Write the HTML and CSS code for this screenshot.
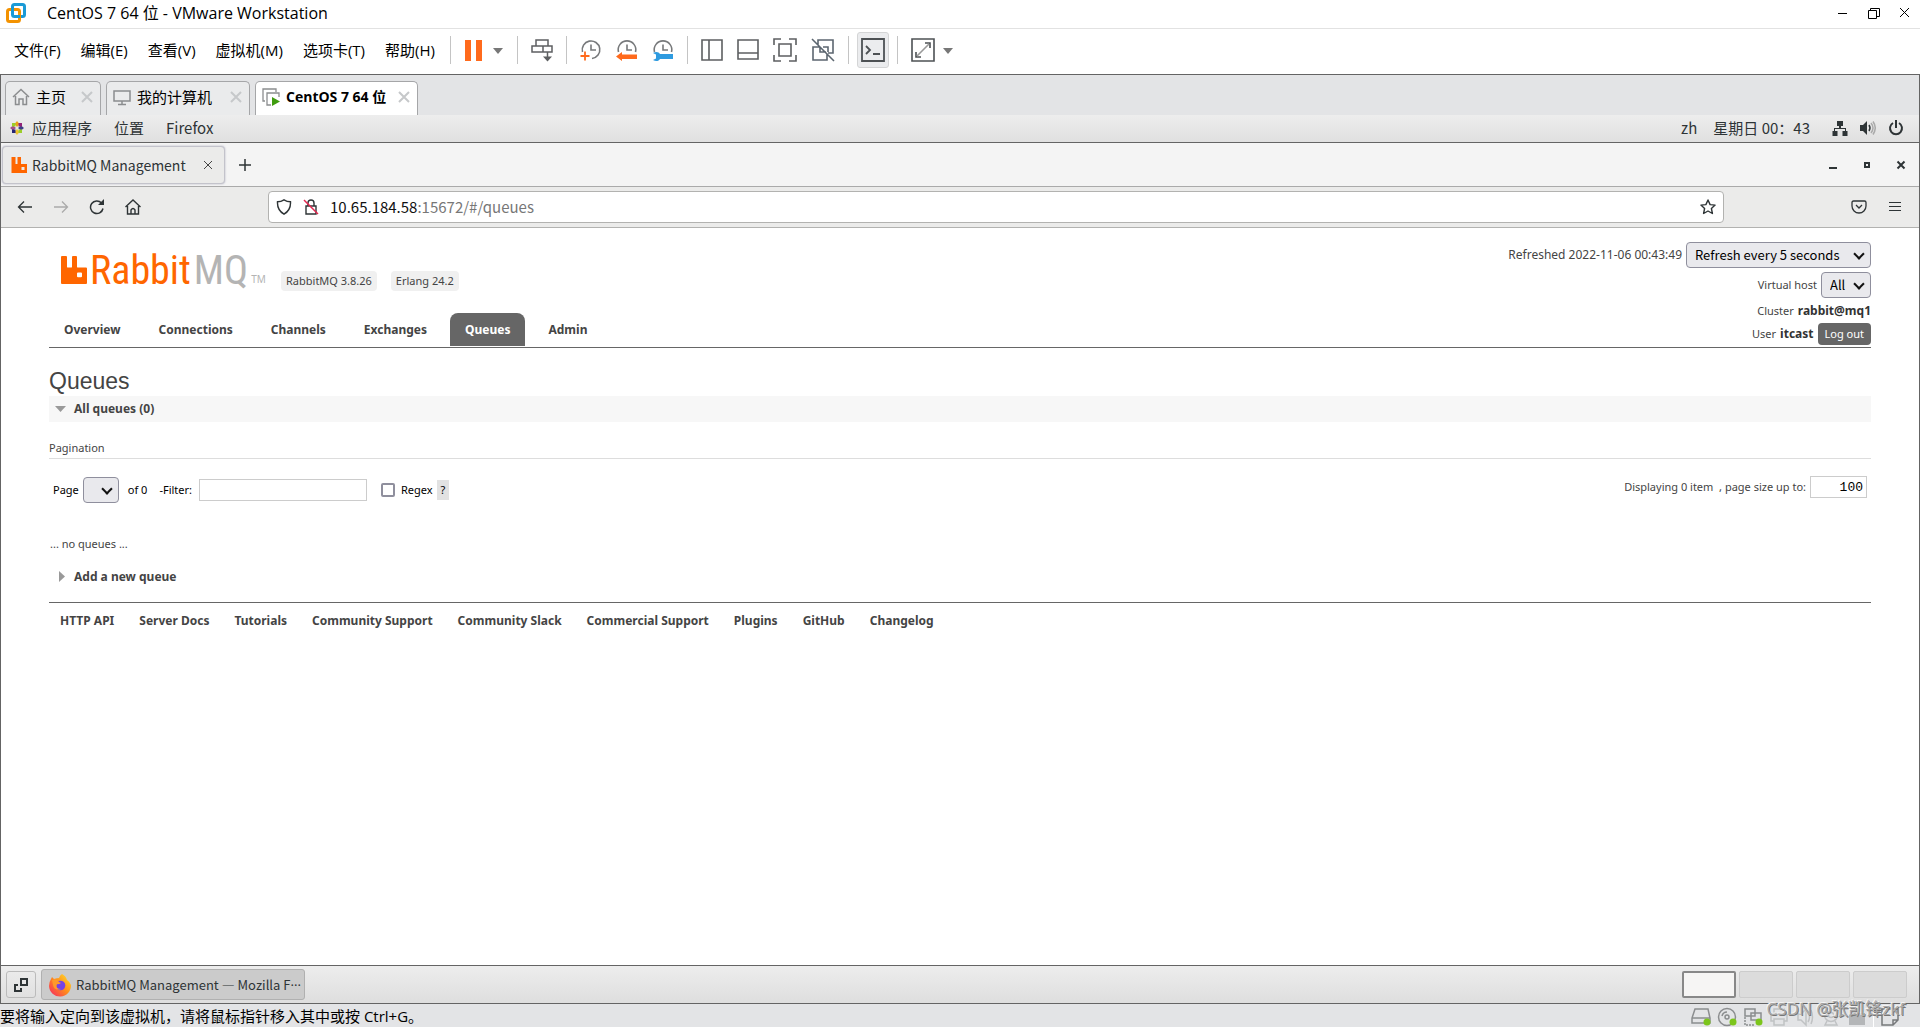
FILE: index.html
```html
<!DOCTYPE html>
<html lang="zh-CN">
<head>
<meta charset="utf-8">
<title>CentOS 7 64 位 - VMware Workstation</title>
<link rel="stylesheet" href="styles.css">
</head>
<body>
<div class="app">
  <header class="titlebar">
    <svg class="app-logo" width="20" height="20" viewBox="0 0 20 20" fill="none" stroke-width="3"><rect x="6.500" y="1.500" width="12" height="12" rx="2" stroke="#1a9ad6"/><rect x="1.500" y="6.500" width="12" height="12" rx="2" stroke="#f39200"/><path d="M6.500 9V4M8 13.500h6" stroke="#1a9ad6"/></svg>
    <span class="app-title">CentOS 7 64 位 - VMware Workstation</span>
    <div class="win-controls">
      <button aria-label="Minimize"><svg width="12" height="12" viewBox="0 0 12 12" stroke="#000"><path d="M1 6.500h9"/></svg></button>
      <button aria-label="Restore"><svg width="12" height="12" viewBox="0 0 12 12" stroke="#000" fill="none"><path d="M.5 3.500h8v8h-8zM2.500 3V1.500h9v8H9"/></svg></button>
      <button aria-label="Close"><svg width="12" height="12" viewBox="0 0 12 12" stroke="#000"><path d="M1 1l9 9M10 1l-9 9"/></svg></button>
    </div>
  </header>

  <nav class="menubar">
    <div class="menus"><button>文件(F)</button><button>编辑(E)</button><button>查看(V)</button><button>虚拟机(M)</button><button>选项卡(T)</button><button>帮助(H)</button></div>
    <span class="sep"></span>
    <div class="tools">
      <button aria-label="Suspend"><svg width="40" height="24" viewBox="0 0 40 24"><path d="M1 2h6v21H1zM12 2h6v21h-6z" fill="#ff6a1c"/><path d="M29 10h10l-5 6z" fill="#777"/></svg></button>
    </div>
    <span class="sep"></span>
    <div class="tools">
      <button aria-label="Send Ctrl+Alt+Del"><svg width="22" height="24" viewBox="0 0 22 24" fill="none" stroke="#5d5f61" stroke-width="1.500"><path d="M5 2h12v6H5zM1 8h11v6H1zM12 8h9v6h-9zM16.500 14v7"/><path d="M12 18.500h9l-4.500 5z" fill="#5d5f61" stroke="none"/></svg></button>
    </div>
    <span class="sep"></span>
    <div class="tools">
      <button aria-label="Take snapshot"><svg width="22" height="24" viewBox="0 0 22 24" fill="none"><path d="M2.500 14A8.800 8.800 0 1 1 12 20.500M11 6.500V12h5" stroke="#77797b" stroke-width="1.600"/><path d="M5 13.500v9M.5 18h9" stroke="#ff6a1c" stroke-width="1.800"/></svg></button>
      <button aria-label="Revert snapshot"><svg width="22" height="24" viewBox="0 0 22 24" fill="none"><path d="M2.500 14A8.800 8.800 0 1 1 19.500 14M11 6.500V12h5" stroke="#77797b" stroke-width="1.600"/><path d="M0 18.500l6-4.500v2.500h15v4.500H6v2z" fill="#ff6a1c"/></svg></button>
      <button aria-label="Manage snapshots"><svg width="22" height="24" viewBox="0 0 22 24" fill="none"><path d="M2.500 14A8.800 8.800 0 1 1 19.500 14M11 6.500V12h5" stroke="#77797b" stroke-width="1.600"/><path d="M1 15c3-2 6-1 7 1h13v5H8c-1 2-4 3-7 1l3-1.500v-4z" fill="#2e9be0"/></svg></button>
    </div>
    <span class="sep"></span>
    <div class="tools">
      <button aria-label="Show library"><svg width="22" height="24" viewBox="0 0 22 24" fill="none" stroke="#5d5f61" stroke-width="1.600"><path d="M1 2h20v20H1zM8 2v20"/></svg></button>
      <button aria-label="Show thumbnails"><svg width="22" height="24" viewBox="0 0 22 24" fill="none" stroke="#5d5f61" stroke-width="1.600"><path d="M1 2h20v19H1zM1 15h20"/></svg></button>
      <button aria-label="Full screen"><svg width="24" height="24" viewBox="0 0 24 24" fill="none" stroke="#5d5f61" stroke-width="1.600"><path d="M6 6h12v12H6zM1 7V1h7M16 1h7v6M23 17v6h-7M8 23H1v-6"/></svg></button>
      <button aria-label="Unity"><svg width="24" height="24" viewBox="0 0 24 24" fill="none" stroke="#5c6670" stroke-width="1.600"><path d="M7 7V2h15v13h-5M9 9H2v13h14v-6M9 9v5h6M12 9h5v5M1 1l22 22"/></svg></button>
    </div>
    <span class="sep"></span>
    <div class="tools">
      <button class="pressed" aria-label="Console view"><svg width="24" height="24" viewBox="0 0 24 24" fill="none" stroke="#4d5154" stroke-width="1.800"><path d="M1 1h22v22H1zM5 8l4 4-4 4M12 16h7"/></svg></button>
    </div>
    <span class="sep"></span>
    <div class="tools">
      <button aria-label="Stretch"><svg width="42" height="24" viewBox="0 0 42 24" fill="none" stroke="#4d5154" stroke-width="1.600"><path d="M1 1h22v22H1zM14 5h5v5M5 14v5h5"/><path d="M6 18L18 6" stroke="#999"/><path d="M32 10h10l-5 6z" fill="#777" stroke="none"/></svg></button>
    </div>
  </nav>

  <div class="vm-tabs">
    <div class="vm-tab vm-home"><svg width="18" height="18" viewBox="0 0 18 18" fill="none" stroke="#8b8d8f" stroke-width="1.500"><path d="M1 9l8-7.500L17 9M3.500 8v8.500H7V11h4v5.500h3.500V8"/></svg><span>主页</span><button aria-label="关闭主页"><svg width="12" height="12" viewBox="0 0 12 12" stroke="#c6c8ca" stroke-width="2"><path d="M1 1l10 10M11 1L1 11"/></svg></button></div>
    <div class="vm-tab vm-computer"><svg width="18" height="18" viewBox="0 0 18 18" fill="none" stroke="#8b8d8f" stroke-width="1.500"><path d="M1 3h16v10H1zM9 13v3M5 16.500h8"/></svg><span>我的计算机</span><button aria-label="关闭我的计算机"><svg width="12" height="12" viewBox="0 0 12 12" stroke="#c6c8ca" stroke-width="2"><path d="M1 1l10 10M11 1L1 11"/></svg></button></div>
    <div class="vm-tab vm-guest"><svg width="18" height="18" viewBox="0 0 18 18" fill="none" stroke="#8b8d8f" stroke-width="1.300"><path d="M3 13H1V1h13v3M9 17H5V5h12v4"/><path d="M10 9l8 4.500-8 4.500z" fill="#3f9c0f" stroke="none"/></svg><span>CentOS 7 64 位</span><button aria-label="关闭虚拟机"><svg width="12" height="12" viewBox="0 0 12 12" stroke="#c6c8ca" stroke-width="2"><path d="M1 1l10 10M11 1L1 11"/></svg></button></div>
  </div>

  <main class="guest">
    <div class="gnome-bar">
      <svg width="14" height="14" viewBox="0 0 14 14"><path d="M7 0l2.500 3L7 6 4.500 3z" fill="#e8a317"/><path d="M7 14l2.500-3L7 8l-2.500 3z" fill="#efc12f"/><path d="M0 7l3-2.500L6 7 3 9.500z" fill="#a14f8c"/><path d="M14 7l-3-2.500L8 7l3 2.500z" fill="#3a3f87"/><path d="M2 2h3.500v3.500H2z" fill="#9ccd2a"/><path d="M8.500 2H12v3.500H8.500z" fill="#932279"/><path d="M2 8.500h3.500V12H2z" fill="#262577"/><path d="M8.500 8.500H12V12H8.500z" fill="#9ccd2a"/></svg>
      <button>应用程序</button><button>位置</button><button>Firefox</button>
      <div class="gnome-status">
        <span>zh</span><span class="clock">星期日 00：43</span>
        <svg width="16" height="16" viewBox="0 0 16 16" fill="#2e3436"><path d="M5 1h6v5H9v2h5v3h1.500v5h-5v-5H13V9H3v2h2.500v5h-5v-5H2V8h5V6H5z"/></svg>
        <svg width="16" height="16" viewBox="0 0 16 16" fill="none"><path d="M0 5h3l4-4v14l-4-4H0z" fill="#2e3436"/><path d="M9 5q2 3 0 6" stroke="#2e3436" stroke-width="1.500"/><path d="M11 3q4 5 0 10M13 1.500q4.500 6.500 0 13" stroke="#aaa" stroke-width="1.500"/></svg>
        <svg width="16" height="16" viewBox="0 0 16 16" fill="none" stroke="#2e3436" stroke-width="2"><path d="M5 3a6 6 0 1 0 6 0M8 0v8"/></svg>
      </div>
    </div>

    <div class="ff-tabs">
      <div class="ff-tab"><svg width="16" height="16" viewBox="0 0 16 16" fill="#f60"><path fill-rule="evenodd" d="M.5 0h4v7h2V0h3.500v7h6v9H.5zM10.500 10v3h3v-3z"/></svg><span>RabbitMQ Management</span><button aria-label="Close tab"><svg width="8" height="8" viewBox="0 0 8 8" stroke="#444"><path d="M0 0l8 8M8 0L0 8"/></svg></button></div>
      <button class="new-tab" aria-label="New tab"><svg width="12" height="12" viewBox="0 0 12 12" stroke="#2e3436" stroke-width="1.500"><path d="M6 0v12M0 6h12"/></svg></button>
      <div class="ff-controls">
        <button aria-label="Minimize"><svg width="10" height="10" viewBox="0 0 10 10"><path d="M1 7h8v2H1z" fill="#2e3436"/></svg></button>
        <button aria-label="Maximize"><svg width="10" height="10" viewBox="0 0 10 10"><path d="M3 3h4v4H3z" fill="none" stroke="#2e3436" stroke-width="2"/></svg></button>
        <button aria-label="Close"><svg width="10" height="10" viewBox="0 0 10 10"><path d="M1.500 1.500l7 7M8.500 1.500l-7 7" stroke="#2e3436" stroke-width="2"/></svg></button>
      </div>
    </div>

    <div class="ff-nav">
      <button aria-label="Back"><svg width="16" height="16" viewBox="0 0 16 16" fill="none" stroke="#2e3436" stroke-width="1.300"><path d="M15 8H1.500M7 2.500L1.500 8 7 13.500"/></svg></button>
      <button aria-label="Forward"><svg width="16" height="16" viewBox="0 0 16 16" fill="none" stroke="#aaa" stroke-width="1.300"><path d="M1 8h13.500M9 2.500L14.500 8 9 13.500"/></svg></button>
      <button aria-label="Reload"><svg width="16" height="16" viewBox="0 0 16 16" fill="none" stroke="#2e3436" stroke-width="1.500"><path d="M14 9.500A6.300 6.300 0 1 1 12.500 4"/><path d="M15 0v6H9z" fill="#2e3436" stroke="none"/></svg></button>
      <button aria-label="Home"><svg width="16" height="16" viewBox="0 0 16 16" fill="none" stroke="#2e3436" stroke-width="1.400"><path d="M.5 8L8 1l7.500 7M2.500 7v8h11V7M6 15v-4q2-3 4 0v4"/></svg></button>
      <div class="url">
        <svg width="16" height="16" viewBox="0 0 16 16" fill="none" stroke="#2e3436" stroke-width="1.400"><path d="M8 .8q3 2 6.500 2Q15 11 8 15.200 1 11 1.500 2.800 5 2.800 8 .8z"/></svg>
        <svg width="16" height="16" viewBox="0 0 16 16" fill="none" stroke="#2e3436" stroke-width="1.400"><path d="M3 7h10v8H3zM5 7V4a3 3 0 0 1 6 0v3"/><path d="M1 1l14 14" stroke="#e22850" stroke-width="1.500"/></svg>
        <span class="address">10.65.184.58<i>:15672/#/queues</i></span>
        <svg width="16" height="16" viewBox="0 0 16 16" fill="none" stroke="#2e3436" stroke-width="1.400" stroke-linejoin="round"><path d="M8 1l2.100 4.600 5 .5-3.700 3.400 1 5L8 12l-4.400 2.500 1-5L.9 6.100l5-.5z"/></svg>
      </div>
      <div class="ff-end">
        <button aria-label="Pocket"><svg width="16" height="16" viewBox="0 0 16 16" fill="none" stroke="#2e3436" stroke-width="1.300"><path d="M2.500 2h11q1.500 0 1.500 1.500V7a7 7 0 0 1-14 0V3.500Q1 2 2.500 2zM5 6l3 3 3-3"/></svg></button>
        <button aria-label="Menu"><svg width="12" height="16" viewBox="0 0 12 16" stroke="#2e3436"><path d="M0 3.500h12M0 7.500h12M0 11.500h12"/></svg></button>
      </div>
    </div>

    <div class="page">
      <div class="page-head">
        <div class="brand">
          <div class="logo"><svg width="26" height="29" viewBox="0 0 26 30" preserveAspectRatio="none"><path fill="#f60" fill-rule="evenodd" d="M1 0h4q1 0 1 1v10q0 1 1 1h3q1 0 1-1V1q0-1 1-1h3q1 0 1 1v10q0 1 1 1h8q1 0 1 1v15q0 1-1 1H1q-1 0-1-1V1q0-1 1-1zM17 17q-1 0-1 1v3q0 1 1 1h3q1 0 1-1v-3q0-1-1-1z"/></svg><span class="rabbit">Rabbit</span><span class="mq">MQ</span><span class="tm">TM</span></div>
          <span class="badge">RabbitMQ 3.8.26</span><span class="badge">Erlang 24.2</span>
        </div>
        <div class="session">
          <div><label for="refresh" class="refreshed">Refreshed 2022-11-06 00:43:49</label><span class="sel"><select id="refresh" class="refresh"><option>Refresh every 5 seconds</option></select></span></div>
          <div><label for="vhost">Virtual host</label><span class="sel"><select id="vhost" class="vhost"><option>All</option></select></span></div>
          <div class="cluster">Cluster <b>rabbit@mq1</b></div>
          <div>User <b>itcast</b><button class="logout">Log out</button></div>
        </div>
        <nav class="menu"><a href="#o">Overview</a><a href="#c">Connections</a><a href="#h">Channels</a><a href="#e">Exchanges</a><a href="#q" class="current">Queues</a><a href="#a">Admin</a></nav>
      </div>
      <h1>Queues</h1>
      <h2 class="open"><svg width="12" height="6" viewBox="0 0 12 6"><path d="M0 0h11L5.500 6z" fill="#999"/></svg>All queues (0)</h2>
      <div class="pagination-title">Pagination</div>
      <div class="filter-row">
        <label for="pg">Page</label><span class="sel"><select id="pg" class="pg"></select></span>
        <span class="of">of 0</span><label for="flt">-Filter:</label><input id="flt" class="filter" type="text">
        <input id="rx" class="check" type="checkbox"><label for="rx">Regex</label><button class="help">?</button>
        <div class="display"><label for="size">Displaying 0 item &nbsp;, page size up to:</label><input id="size" class="size" type="text" value="100"></div>
      </div>
      <p class="none">... no queues ...</p>
      <h2 class="closed"><svg width="12" height="12" viewBox="0 0 12 12"><path d="M4 0v11l6-5.500z" fill="#999"/></svg>Add a new queue</h2>
      <footer class="links"><a href="#1">HTTP API</a><a href="#2">Server Docs</a><a href="#3">Tutorials</a><a href="#4">Community Support</a><a href="#5">Community Slack</a><a href="#6">Commercial Support</a><a href="#7">Plugins</a><a href="#8">GitHub</a><a href="#9">Changelog</a></footer>
    </div>

    <div class="taskbar">
      <button class="desk" aria-label="Show desktop"><svg width="14" height="14" viewBox="0 0 14 14" fill="none" stroke="#2e3436" stroke-width="2"><path d="M7 1h6v6H7zM4 7H1v6h6v-3"/></svg></button>
      <button class="task"><svg width="24" height="24" viewBox="0 0 24 24"><defs><linearGradient id="fx" x1="1" y1="0" x2="0" y2="1"><stop offset="0" stop-color="#ffe62e"/><stop offset=".5" stop-color="#ff8a1c"/><stop offset="1" stop-color="#f5216b"/></linearGradient></defs><path d="M14 1q4 2 5 6 3 2 4 5a11 11 0 0 1-22 1q0-4 2-7l1-2 2 2q3-1 5-1 1-3 3-4z" fill="url(#fx)"/><circle cx="12.500" cy="12.500" r="4.800" fill="#7542e5"/><path d="M4 7q5-2 7 2l2 1q-3 2-4 1-2 5 4 5-7 2-8-4z" fill="#ff9a2a"/></svg><span>RabbitMQ Management — Mozilla F<span class="dots">···</span></span></button>
      <div class="spaces"><span class="on"></span><span></span><span></span><span></span></div>
    </div>
  </main>

  <footer class="statusbar">
    <span>要将输入定向到该虚拟机，请将鼠标指针移入其中或按 Ctrl+G。</span>
    <div class="devices">
      <svg width="20" height="20" viewBox="0 0 20 20" fill="none" stroke="#8b8d8f" stroke-width="1.500"><path d="M4 2h13l2 9v5H1v-5zM1 11h18"/><circle cx="16" cy="15" r="3.500" fill="#7cc51c" stroke="none"/></svg>
      <svg width="20" height="20" viewBox="0 0 20 20" fill="none" stroke="#8b8d8f" stroke-width="1.500"><circle cx="10" cy="10" r="8.500"/><circle cx="10" cy="10" r="2"/><path d="M5 9q1-4 5-4"/><circle cx="16" cy="15" r="3.500" fill="#7cc51c" stroke="none"/></svg>
      <svg width="20" height="20" viewBox="0 0 20 20" fill="none" stroke="#8b8d8f" stroke-width="1.500"><path d="M2 2h10v7H2zM8 6h10v7H8z"/><path d="M2 10v8h9" stroke-dasharray="2 1"/><circle cx="16" cy="15" r="3.500" fill="#7cc51c" stroke="none"/></svg>
      <svg width="20" height="20" viewBox="0 0 20 20" fill="none" stroke="#c0c2c4" stroke-width="1.500"><path d="M5 7V2h10v5M5 14H2V7h16v7h-3M5 12h10v6H5z"/></svg>
      <svg width="20" height="20" viewBox="0 0 20 20" fill="none" stroke="#c0c2c4" stroke-width="1.500"><path d="M3 7h3l5-5v16l-5-5H3zM13 5q3 5 0 10M16 3q3 7 0 14"/></svg>
      <svg width="20" height="20" viewBox="0 0 20 20" fill="none" stroke="#c0c2c4" stroke-width="1.500"><circle cx="10" cy="8" r="6.500"/><circle cx="10" cy="8" r="2.500"/><path d="M6 14l-2 4h12l-2-4"/></svg>
      <svg width="20" height="20" viewBox="0 0 20 20" fill="#b4b6b8"><path d="M2 6h16v12H2z"/></svg>
      <i></i>
      <svg width="20" height="20" viewBox="0 0 20 20" fill="none" stroke="#77797b" stroke-width="1.500"><path d="M2 2h16v11l-5 5H2zM13 18v-5h5"/></svg>
    </div>
    <span class="watermark">CSDN @张凯锋zkf</span>
  </footer>
</div>
</body>
</html>
```
FILE: styles.css
```css
* { box-sizing: border-box; }
body { margin: 0; background: #fff; color: #000; font: 15px/20px "Noto Sans", "Noto Sans CJK SC", sans-serif; }
button { border: 0; background: none; padding: 0; font: inherit; color: inherit; display: flex; align-items: center; white-space: nowrap; }
svg { display: block; flex: none; }
a { color: inherit; text-decoration: none; }
.app { min-height: 100vh; display: flex; flex-direction: column; white-space: nowrap; }

.titlebar { height: 29px; border-bottom: 1px solid #e2e2e2; display: flex; align-items: center; padding: 0 9px 2px 6px; font: 16px/20px "Open Sans", "Noto Sans CJK SC", sans-serif; }
.app-title { margin-left: 21px; }
.win-controls { margin-left: auto; display: flex; gap: 19px; }

.menubar { height: 46px; border-bottom: 1px solid #646464; display: flex; align-items: center; padding: 0 14px 3px; gap: 20px; font-family: "Open Sans", "Noto Sans CJK SC", sans-serif; }
.menus { display: flex; gap: 20px; margin-right: 2px; }
.sep { width: 1px; height: 28px; background: #c4c4c4; margin: 0 -7px; }
.tools { display: flex; gap: 14px; }
.pressed { background: #ebecee; border: 1px solid #d4d5d6; border-radius: 3px; padding: 5px 3px; margin: 0 -5px; }

.vm-tabs { height: 40px; background: #e3e4e6; border: solid #646464; border-width: 0 1px; display: flex; align-items: flex-end; gap: 5px; padding-left: 4px; font-family: "Noto Sans CJK SC", sans-serif; }
.vm-tab { height: 34px; border: 1px solid #a5a6a8; border-bottom: 0; border-radius: 5px 5px 0 0; background: #eaebec; display: flex; align-items: center; padding: 0 7px 3px 6px; gap: 6px; }
.vm-tab button { margin-left: auto; }
.vm-home { width: 96px; }
.vm-computer { width: 144px; }
.vm-guest { width: 163px; background: #fff; font: bold 14px/20px "Open Sans", "Noto Sans CJK SC", sans-serif; }

.guest { flex: 1; display: flex; flex-direction: column; border: solid #646464; border-width: 0 1px 1px; }
.gnome-bar { height: 28px; border-bottom: 1px solid #646464; background: linear-gradient(#ededed, #e0e0e0); color: #2e3436; display: flex; align-items: center; padding: 0 15px 2px 9px; font-family: "Noto Sans CJK SC", sans-serif; }
.gnome-bar button { margin-left: 22px; }
.gnome-bar svg + button { margin-left: 8px; }
.gnome-status { margin-left: auto; display: flex; align-items: center; gap: 12px; }
.clock { margin: 0 10px 0 4px; }

.ff-tabs { height: 44px; background: #f4f4f4; border-bottom: 1px solid #aaa; display: flex; align-items: center; padding: 0 13px 0 1px; color: #2e3436; }
.ff-tab { width: 223px; height: 38px; background: #ebebea; border: 1px solid #c3c3cb; border-radius: 4px; box-shadow: 0 0 2px #aab; display: flex; align-items: center; gap: 5px; padding: 0 12px 0 8px; font: 14px/20px "Noto Sans CJK SC", sans-serif; }
.ff-tab button { margin-left: auto; }
.new-tab { margin-left: 14px; }
.ff-controls { margin-left: auto; display: flex; gap: 24px; }

.ff-nav { height: 41px; background: #ebebea; border-bottom: 1px solid #b2b2b0; display: flex; align-items: center; gap: 20px; padding: 0 18px 0 16px; }
.url { height: 32px; flex: 1; margin: 0 107px; background: #fff; border: 1px solid #b2b2b0; border-radius: 4px; display: flex; align-items: center; gap: 11px; padding: 0 7px; font-family: "Noto Sans CJK SC", sans-serif; }
.address { flex: 1; color: #111; }
.address i { font-style: normal; color: #777; }
.ff-end { display: flex; gap: 22px; }

.page { flex: 1; padding: 0 48px; font: 11px/16px "Noto Sans", sans-serif; color: #444; }
.page-head { display: grid; grid-template-columns: 1fr auto; border-bottom: 1px solid #666; height: 120px; }
.brand { display: flex; align-items: flex-end; padding: 0 0 0 12px; height: 63px; gap: 12px; }
.logo { display: flex; align-items: flex-end; gap: 3px; width: 208px; height: 36px; padding-bottom: 6px; }
.badge { background: #f0f0f0; border-radius: 4px; padding: 2px 5px; }
.badge + .badge { margin-left: 2px; }
.session { grid-row: span 2; padding-top: 14px; display: flex; flex-direction: column; align-items: flex-end; gap: 4px; }
.session > div { display: flex; align-items: center; gap: 4px; }
.session .cluster { margin-top: 1px; }
.session b { color: #333; font-size: 12px; }
.refreshed { font-size: 12px; }
select { appearance: none; height: 26px; border: 1px solid #8f8f9d; border-radius: 4px; background: #e9e9ed; color: #000; font: 13px/20px "Noto Sans CJK SC", sans-serif; padding: 0 8px; display: block; }
.sel { position: relative; }
.sel::after { content: ""; position: absolute; right: 8px; top: 8px; width: 6px; height: 6px; border: solid #111; border-width: 0 2px 2px 0; transform: rotate(45deg); pointer-events: none; }
.refresh { width: 185px; }
.vhost { width: 50px; }
.pg { width: 36px; }
.logout { background: #666; color: #fff; border-radius: 4px; padding: 3px 7px; }
.menu { display: flex; gap: 8px; align-self: end; font-size: 12px; font-weight: bold; padding-bottom: 1px; }
.menu a { padding: 9px 15px 8px; border-radius: 8px 8px 0 0; }
.menu .current { background: #666; color: #fff; }
.rabbit, .mq { font: 40px/28px "Liberation Sans Narrow", "Roboto Condensed", "Open Sans", sans-serif; }
.rabbit { color: #f60; }
.mq { color: #b4b4b4; }
.tm { color: #b4b4b4; font-size: 10px; line-height: 12px; }
h1 { margin: 18px 0 0; font: 23px/30px "Liberation Sans", sans-serif; }
h2 { margin: 0; font: bold 12px/16px "Noto Sans", sans-serif; display: flex; align-items: center; gap: 7px; padding-left: 6px; }
.open { height: 26px; background: #f7f7f7; }
.pagination-title { margin-top: 18px; height: 19px; border-bottom: 1px solid #ddd; }
.filter-row { display: flex; align-items: center; height: 28px; margin-top: 17px; color: #000; padding: 0 4px; gap: 4px; }
.filter, .size { border: 1px solid #ccc; height: 22px; padding: 1px 3px; }
.filter { width: 168px; margin-left: 3px; }
.check { appearance: none; width: 14px; height: 14px; border: 2px solid #8f8f9d; border-radius: 2px; margin: 0 2px 0 10px; background: #fff; }
.of { margin: 0 8px 0 5px; }
.help { background: #e2e2e2; padding: 2px 4px; }
.display { margin-left: auto; align-self: flex-start; display: flex; align-items: center; gap: 4px; color: #444; }
.size { width: 57px; text-align: right; font: 13px "Liberation Mono", monospace; }
.none { margin: 32px 1px 17px; }
.links { margin-top: 17px; border-top: 1px solid #666; padding: 10px 11px; display: flex; gap: 25px; font-size: 12px; font-weight: bold; }

.taskbar { height: 38px; border-top: 1px solid #646464; background: linear-gradient(#ededed, #dedede); display: flex; align-items: center; gap: 5px; padding: 0 12px 0 5px; color: #2e3436; }
.desk { width: 30px; height: 27px; border: 1px solid #bbb; border-radius: 3px; justify-content: center; }
.task { width: 264px; height: 31px; border: 1px solid #b0b0b0; border-radius: 3px; background: #cbcbcb; padding: 0 6px; gap: 4px; font: 13px/20px "Noto Sans CJK SC", sans-serif; }
.dots { font-family: "Noto Sans", sans-serif; }
.spaces { margin-left: auto; display: flex; gap: 3px; }
.spaces span { width: 54px; height: 27px; border: 1px solid #ccc; background: #dcdcdc; border-radius: 2px; }
.spaces .on { background: #f6f5f4; border: 2px solid #888; }

.statusbar { position: relative; height: 23px; background: #e3e4e6; display: flex; align-items: center; font-family: "Open Sans", "Noto Sans CJK SC", sans-serif; }
.devices { margin-left: auto; display: flex; gap: 6px; padding: 3px 20px 0 0; }
.devices i { width: 1px; background: #fff; }
.watermark { position: absolute; right: 15px; top: -7px; color: #aaa; font-size: 17px; line-height: 24px; text-shadow: 1px 1px 0 #777, -1px -1px 0 #f4f4f4; }
```
